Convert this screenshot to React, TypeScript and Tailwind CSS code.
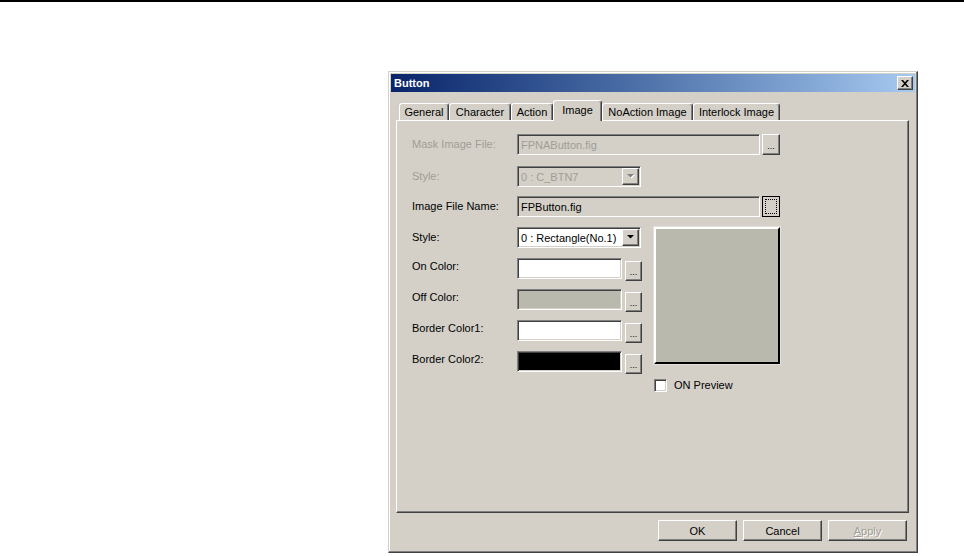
import React from "react"

const raised =
  "border border-t-white border-l-white border-r-[#404040] border-b-[#404040] shadow-[inset_-1px_-1px_0_#808080,inset_1px_1px_0_#d4d0c8]"
const sunken =
  "border border-t-[#808080] border-l-[#808080] border-r-white border-b-white shadow-[inset_1px_1px_0_#404040,inset_-1px_-1px_0_#d4d0c8]"

const tabs = [
  { name: "General", w: "w-[50px]" },
  { name: "Character", w: "w-[62px]" },
  { name: "Action", w: "w-[42px]" },
  { name: "Image", w: "w-[49px]", active: true },
  { name: "NoAction Image", w: "w-[91px]" },
  { name: "Interlock Image", w: "w-[87px]" }
]

const DropArrow = ({ disabled }: { disabled?: boolean }) => (
  <svg width="9" height="5" viewBox="0 0 9 5">
    {disabled && <path d="M2 1h7L5.5 4.5z" fill="#ffffff" />}
    <path d="M1 0h7L4.5 3.5z" fill={disabled ? "#808080" : "#000000"} />
  </svg>
)

const Combo = ({ value, disabled }: { value: string; disabled?: boolean }) => (
  <div
    className={`${sunken} w-[124px] h-[21px] flex items-center ${
      disabled ? "bg-[#d4d0c8] text-[#a09d96]" : "bg-white text-black"
    }`}>
    <span className="flex-1 pl-[3px] pt-px whitespace-nowrap">{value}</span>
    <div
      className={`${raised} bg-[#d4d0c8] w-[17px] h-[17px] mr-px flex items-center justify-center`}>
      <DropArrow disabled={disabled} />
    </div>
  </div>
)

const DotsButton = ({ className = "" }: { className?: string }) => (
  <div
    className={`${raised} bg-[#d4d0c8] w-[18px] h-[20px] flex items-end justify-center pb-[3px] ${className}`}>
    <span className="text-[9px] leading-none text-black tracking-[0px]">...</span>
  </div>
)

const ColorRow = ({ label, fill }: { label: string; fill: string }) => (
  <div className="flex items-start h-[23px] mt-[8px]">
    <span className="w-[105px] pt-[2px]">{label}</span>
    <div className={`${sunken} w-[105px] h-[21px] ${fill}`} />
    <DotsButton className="ml-[3px] mt-[3px] !w-[17px]" />
  </div>
)

export default function App() {
  return (
    <div className="w-[964px] h-[556px] bg-white overflow-hidden font-['Liberation_Sans',Arial,sans-serif] text-[11px] leading-[13px] text-black">
      <div className="h-[2px] bg-black" />
      <div className="ml-[388px] mt-[69px] w-[530px] h-[482px] bg-[#d4d0c8] border border-t-[#d4d0c8] border-l-[#d4d0c8] border-r-[#404040] border-b-[#404040] shadow-[inset_-1px_-1px_0_#808080,inset_1px_1px_0_#ffffff] p-[2px] flex flex-col">
        <div className="h-[18px] flex items-center justify-between bg-gradient-to-r from-[#0a246a] to-[#a6caf0] pl-[3px] pr-[2px]">
          <span className="text-white font-bold">Button</span>
          <div className={`${raised} bg-[#d4d0c8] w-[16px] h-[14px] flex items-center justify-center`}>
            <svg width="8" height="7" viewBox="0 0 8 7">
              <path d="M0 0h2l2 2.2L6 0h2L5 3.5 8 7H6L4 4.8 2 7H0l3-3.5z" fill="#000" />
            </svg>
          </div>
        </div>

        <div className="ml-[5px] mr-[6px] mt-[8px] flex flex-col">
          <div className="h-[20px] flex items-end pl-[3px] relative z-10">
            {tabs.map((t) =>
              t.active ? (
                <div
                  key={t.name}
                  className={`${t.w} h-[21px] -mb-px bg-[#d4d0c8] border-t border-l border-t-white border-l-white border-r border-r-[#404040] shadow-[inset_-1px_0_0_#808080] rounded-t-[3px] flex items-start justify-center pt-[3px]`}>
                  {t.name}
                </div>
              ) : (
                <div
                  key={t.name}
                  className={`${t.w} h-[17px] border-t border-l border-t-white border-l-white border-r border-r-[#404040] shadow-[inset_-1px_0_0_#808080] rounded-t-[3px] flex items-start justify-center pt-[2px] whitespace-nowrap`}>
                  {t.name}
                </div>
              )
            )}
          </div>

          <div className="h-[393px] border border-t-white border-l-white border-r-[#404040] border-b-[#404040] shadow-[inset_-1px_-1px_0_#808080] pt-[13px] pl-[15px]">
            <div className="flex items-center h-[21px]">
              <span className="w-[105px] text-[#a09d96]">Mask Image File:</span>
              <div className={`${sunken} w-[243px] h-[21px] bg-[#d4d0c8] text-[#a09d96] flex items-center pl-[3px] pt-px`}>
                FPNAButton.fig
              </div>
              <DotsButton className="ml-[2px] !h-[21px]" />
            </div>

            <div className="flex items-center h-[21px] mt-[11px]">
              <span className="w-[105px] text-[#a09d96]">Style:</span>
              <Combo value="0 : C_BTN7" disabled />
            </div>

            <div className="flex items-center h-[21px] mt-[9px]">
              <span className="w-[105px]">Image File Name:</span>
              <div className={`${sunken} w-[243px] h-[21px] bg-[#d4d0c8] flex items-center pl-[3px] pt-px`}>
                FPButton.fig
              </div>
              <div className="ml-[2px] w-[18px] h-[21px] border border-black bg-[#d4d0c8] flex items-center justify-center">
                <div className="w-[12px] h-[15px] border border-dotted border-black" />
              </div>
            </div>

            <div className="flex mt-[10px]">
              <div className="flex flex-col">
                <div className="flex items-center h-[21px]">
                  <span className="w-[105px]">Style:</span>
                  <Combo value="0 : Rectangle(No.1)" />
                </div>
                <div className="mt-[2px]" />
                <ColorRow label="On Color:" fill="bg-white" />
                <ColorRow label="Off Color:" fill="bg-[#bab9ae]" />
                <ColorRow label="Border Color1:" fill="bg-white" />
                <ColorRow label="Border Color2:" fill="bg-black" />
              </div>

              <div className="ml-[12px] flex flex-col">
                <div className="w-[126px] h-[137px] bg-[#bab9ae] border-2 border-t-white border-l-white border-r-black border-b-black shadow-[0_0_0_1px_#e4e1dc]" />
                <div className="flex items-center mt-[15px]">
                  <div className={`${sunken} w-[13px] h-[13px] bg-white`} />
                  <span className="ml-[7px]">ON Preview</span>
                </div>
              </div>
            </div>
          </div>
        </div>

        <div className="flex justify-end gap-[6px] mt-[7px] mr-[8px]">
          <div className={`${raised} w-[79px] h-[21px] flex items-center justify-center pt-px`}>OK</div>
          <div className={`${raised} w-[79px] h-[21px] flex items-center justify-center pt-px`}>Cancel</div>
          <div className={`${raised} w-[79px] h-[21px] flex items-center justify-center pt-px text-[#a09d96] [text-shadow:1px_1px_0_#ffffff]`}>
            <span>
              <span className="underline">A</span>pply
            </span>
          </div>
        </div>
      </div>
    </div>
  )
}
